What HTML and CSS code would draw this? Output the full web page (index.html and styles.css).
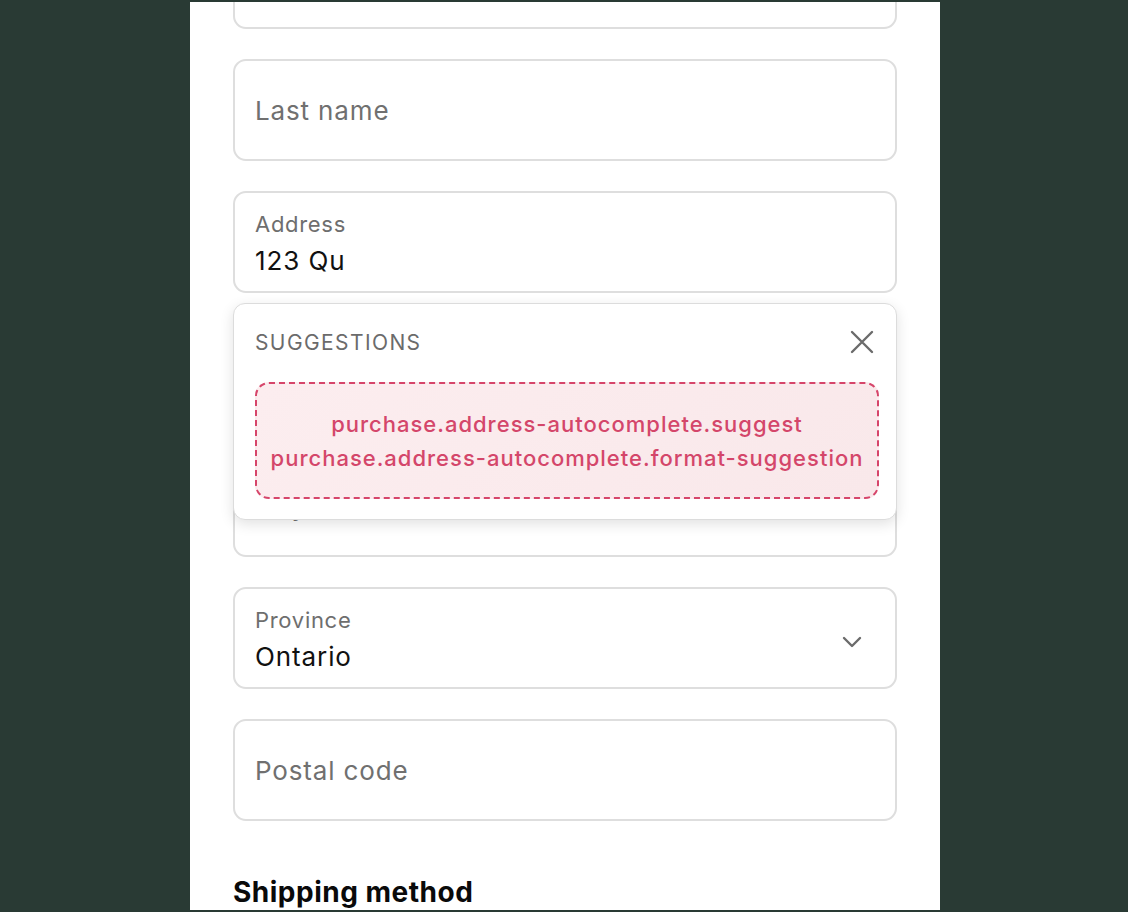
FILE: index.html
```html
<!DOCTYPE html>
<html>
<head>
<meta charset="utf-8">
<link rel="stylesheet" href="styles.css">
</head>
<body>
<div class="panel">
  <div class="form">
    <div class="field"></div>
    <div class="field"><span class="placeholder">Last name</span></div>
    <div class="field-wrap">
      <div class="field filled">
        <span class="label">Address</span>
        <span class="value">123 Qu</span>
      </div>
      <div class="popup">
        <div class="popup-head">
          <span class="popup-title">SUGGESTIONS</span>
          <svg class="close" width="24" height="24" viewBox="0 0 24 24"><path d="M2 2L22 22M22 2L2 22" stroke="#6b6b6b" stroke-width="2.4" stroke-linecap="round" fill="none"/></svg>
        </div>
        <div class="missing">
          <div>purchase.address-autocomplete.suggest</div>
          <div>purchase.address-autocomplete.format-suggestion</div>
        </div>
      </div>
    </div>
    <div class="field"><span class="placeholder">Apartment, suite, etc.</span></div>
    <div class="field"><span class="placeholder">City</span></div>
    <div class="field filled select">
      <div class="select-text">
        <span class="label">Province</span>
        <span class="value">Ontario</span>
      </div>
      <svg class="chev" width="20" height="12" viewBox="0 0 20 12"><path d="M2 2L10 10L18 2" stroke="#6b6b6b" stroke-width="2.4" stroke-linecap="round" stroke-linejoin="round" fill="none"/></svg>
    </div>
    <div class="field"><span class="placeholder">Postal code</span></div>
    <h2 class="section">Shipping method</h2>
  </div>
</div>
</body>
</html>
```
FILE: styles.css
```css
html, body {
  margin: 0;
  padding: 0;
}
body {
  background: #293a34;
  font-family: Inter, "Noto Sans", sans-serif;
  height: 912px;
  overflow: hidden;
}
.panel {
  width: 750px;
  margin: 2px 0 0 190px;
  height: 908px;
  background: #ffffff;
  overflow: hidden;
  box-sizing: border-box;
  padding: 0 43px;
}
.form {
  margin-top: -75px;
  display: flex;
  flex-direction: column;
  gap: 30px;
}
.field-wrap {
  position: relative;
}
.field {
  box-sizing: border-box;
  height: 102px;
  border: 2px solid #dedede;
  border-radius: 13px;
  padding: 0 20px;
  display: flex;
  flex-direction: column;
  justify-content: center;
}
.placeholder {
  font-size: 26px;
  color: #707070;
  letter-spacing: 0.85px;
}
.label {
  font-size: 22px;
  color: #6e6e6e;
  line-height: 26px;
  letter-spacing: 0.7px;
}
.value {
  font-size: 26px;
  color: #111111;
  line-height: 34px;
  margin-top: 7px;
  letter-spacing: 0.9px;
}
.filled {
  padding-top: 4px;
}
.select {
  flex-direction: row;
  align-items: center;
  justify-content: space-between;
}
.select-text {
  display: flex;
  flex-direction: column;
}
.chev {
  margin-right: 13px;
  margin-top: 4px;
}
.popup {
  position: absolute;
  left: 0;
  right: 0;
  top: calc(100% + 10px);
  background: #ffffff;
  border: 1px solid #dcdcdc;
  border-radius: 12px;
  box-shadow: 0 4px 14px rgba(0, 0, 0, 0.12);
  padding: 22px 17px 20px 21px;
  z-index: 2;
}
.popup-head {
  display: flex;
  justify-content: space-between;
  align-items: center;
  height: 30px;
  margin-top: 1px;
}
.popup-title {
  font-size: 21px;
  color: #6b6b6b;
  letter-spacing: 1.4px;
}
.close {
  margin-right: 5px;
}
.missing {
  margin-top: 25px;
  border: 2px dashed #d6456a;
  border-radius: 14px;
  background: linear-gradient(135deg, #fcedef, #f9e8ea);
  color: #d4466a;
  font-size: 22px;
  font-weight: 500;
  text-align: center;
  line-height: 34px;
  letter-spacing: 1px;
  padding: 23px 0 22px;
}
.section {
  margin: 24px 0 0;
  font-size: 28px;
  font-weight: 700;
  color: #0a0a0a;
  letter-spacing: 0.5px;
}
```
